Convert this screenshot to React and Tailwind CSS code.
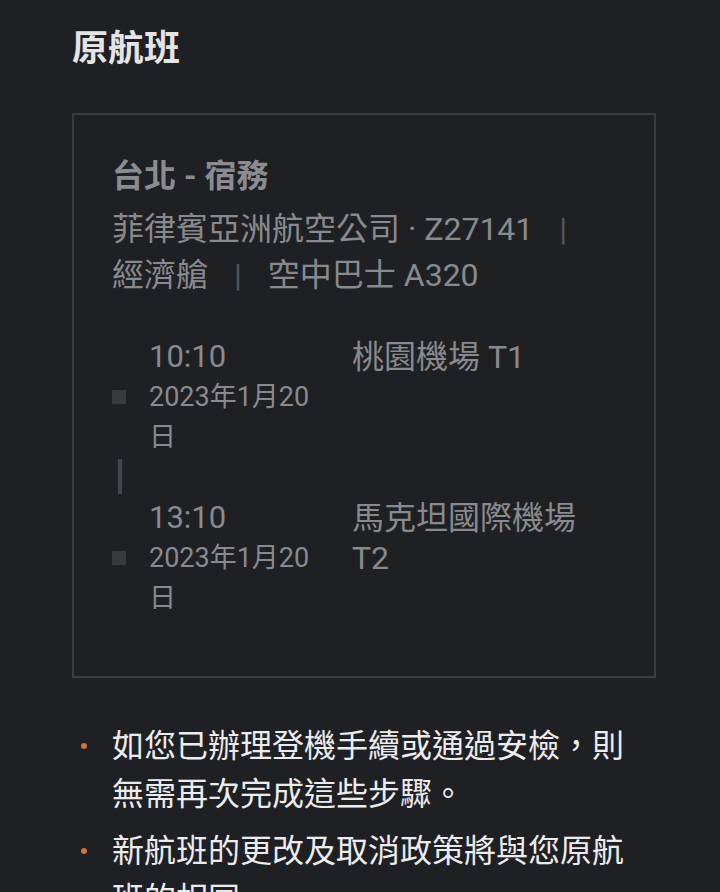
export default function App() {
  const font = { fontFamily: "Roboto, 'Noto Sans CJK TC', sans-serif" };
  const Sep = () => (
    <span className="inline-block mx-[26px] text-[#55565a]">|</span>
  );

  const stops = [
    { time: "10:10", date: "2023年1月20日", place: "桃園機場 T1" },
    { time: "13:10", date: "2023年1月20日", place: "馬克坦國際機場 T2" },
  ];

  return (
    <div className="min-h-[892px] w-[720px] bg-[#1f2024] overflow-hidden" style={font}>
      <div className="pl-[72px] pr-[64px] pt-[25px]">
        <h1 className="text-[36px] leading-[48px] font-bold text-[#e4e4e6]">
          原航班
        </h1>

        <div className="mt-[40px] border-2 border-[#3b3c40] pt-[38px] pb-[58px] pl-[38px] pr-[38px]">
          <div className="text-[32px] leading-[46px] font-bold text-[#8b8c90]">
            台北 - 宿務
          </div>
          <div className="mt-[7px] text-[32px] leading-[46px] text-[#898a8e]">
            <div className="whitespace-nowrap">
              菲律賓亞洲航空公司 · Z27141
              <Sep />
            </div>
            <div className="whitespace-nowrap">
              經濟艙
              <Sep />
              空中巴士 A320
            </div>
          </div>

          <div className="mt-[39px] text-[#898a8e]">
            {stops.map((s, i) => (
              <div key={i}>
                {i > 0 && (
                  <div className="h-[41px] pt-[2px] pl-[6px]">
                    <div className="w-[4px] h-[35px] bg-[#44454a]" />
                  </div>
                )}
                <div className="flex">
                  <div className="w-[37px] pt-[53px]">
                    <div className="w-[14px] h-[14px] bg-[#393a3e]" />
                  </div>
                  <div className="w-[203px] pr-[24px]">
                    <div className="text-[31px] leading-[40px]">{s.time}</div>
                    <div className="text-[27px] leading-[40px]">{s.date}</div>
                  </div>
                  <div className="w-[250px] text-[32px] leading-[40px]">
                    {s.place}
                  </div>
                </div>
              </div>
            ))}
          </div>
        </div>

        <ul className="mt-[44px] text-[32px] leading-[48px] text-[#ececee] pr-[8px]">
          <li className="flex">
            <span className="w-[40px] shrink-0 pt-[21px] pl-[9px]">
              <span className="block w-[6px] h-[6px] rounded-full bg-[#d0743c]" />
            </span>
            <span>如您已辦理登機手續或通過安檢，則無需再次完成這些步驟。</span>
          </li>
          <li className="flex mt-[9px]">
            <span className="w-[40px] shrink-0 pt-[21px] pl-[9px]">
              <span className="block w-[6px] h-[6px] rounded-full bg-[#d0743c]" />
            </span>
            <span>新航班的更改及取消政策將與您原航班的相同。</span>
          </li>
        </ul>
      </div>
    </div>
  );
}
